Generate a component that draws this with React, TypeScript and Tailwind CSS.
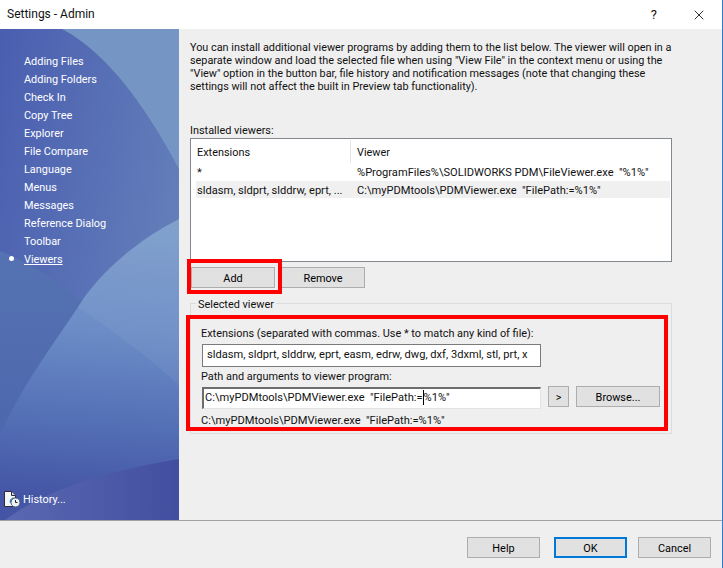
import React from "react";
import { X } from "lucide-react";

const navItems = [
  "Adding Files",
  "Adding Folders",
  "Check In",
  "Copy Tree",
  "Explorer",
  "File Compare",
  "Language",
  "Menus",
  "Messages",
  "Reference Dialog",
  "Toolbar",
  "Viewers",
];

const SidebarArt = () => (
  <svg className="absolute inset-0 h-full w-full" viewBox="0 0 179 491" preserveAspectRatio="none">
    <defs>
      <linearGradient id="base" x1="0" y1="0" x2="1" y2="0.5">
        <stop offset="0" stopColor="#4a5eb0" />
        <stop offset="1" stopColor="#6480ba" />
      </linearGradient>
      <linearGradient id="band" x1="0" y1="0" x2="0" y2="1">
        <stop offset="0" stopColor="#5573b2" />
        <stop offset="1" stopColor="#4a62aa" />
      </linearGradient>
      <linearGradient id="arc" gradientUnits="userSpaceOnUse" x1="110" y1="190" x2="90" y2="470">
        <stop offset="0" stopColor="#7b9ccb" />
        <stop offset="0.4" stopColor="#6b8cc6" />
        <stop offset="0.72" stopColor="#5470b6" />
        <stop offset="1" stopColor="#4455a5" />
      </linearGradient>
      <linearGradient id="foot" x1="0" y1="0" x2="1" y2="0">
        <stop offset="0" stopColor="#5a68b2" />
        <stop offset="1" stopColor="#424fa0" />
      </linearGradient>
    </defs>
    <rect width="179" height="491" fill="url(#base)" />
    <path d="M62 0 C110 25 150 85 179 140 L179 0 Z" fill="#7596c4" />
    <path d="M0 222 C50 240 125 305 179 356 L179 491 L0 491 Z" fill="url(#band)" />
    <path d="M179 190 C130 215 95 250 78 278 C50 320 20 360 0 406 L0 491 L179 491 Z" fill="url(#arc)" />
    <path d="M179 190 C130 215 95 250 78 278 C110 300 145 325 179 356 Z" fill="#ffffff" opacity="0.05" />
    <path d="M5 491 C40 465 90 445 179 430 L179 491 Z" fill="url(#foot)" />
  </svg>
);

const HistoryIcon = () => (
  <svg width="17" height="17" viewBox="0 0 17 17">
    <path d="M.5.5h7l4 4v11H.5z" fill="#f4f6f8" stroke="#2b2b3a" strokeWidth="1" />
    <path d="M7.5.5v4h4" fill="#d5dbe2" stroke="#2b2b3a" strokeWidth="1" />
    <path d="M5.5 11a5 5 0 0 1 5-4.5v3l-3 3z" fill="#2f82b8" />
    <circle cx="11.5" cy="11.5" r="4.5" fill="#eef2f6" stroke="#4a5a78" strokeWidth="1" />
    <path d="M11.5 9v2.5h2" fill="none" stroke="#222" strokeWidth="1" />
  </svg>
);

const Btn = ({ label, className = "" }: { label: string; className?: string }) => (
  <button className={`flex h-[21px] items-center justify-center border bg-[#e1e1e1] pt-px text-black ${className}`}>
    {label}
  </button>
);

export default function App() {
  return (
    <div
      className="flex h-[568px] w-[723px] flex-col overflow-hidden border-r border-[#2b7cd0] bg-[#efefef] text-[10.9px] leading-[13px] text-[#111]"
      style={{ fontFamily: "Roboto, sans-serif" }}
    >
      <header className="flex h-[29px] items-center justify-between bg-white pl-[7px] pr-[15px]">
        <span className="text-[12px]">Settings - Admin</span>
        <div className="flex items-center gap-[34px]">
          <span className="text-[13px]">?</span>
          <X className="h-[16px] w-[16px] text-[#222]" strokeWidth={1.4} />
        </div>
      </header>

      <div className="flex h-[491px]">
        <aside className="relative flex w-[179px] shrink-0 flex-col justify-between overflow-hidden pb-[12px] pt-[23px] text-white">
          <SidebarArt />
          <nav className="relative flex flex-col">
            {navItems.map((item) => (
              <div key={item} className="relative flex h-[18px] items-center pl-[24px]">
                {item === "Viewers" && <span className="absolute left-[9px] top-[6px] h-[5px] w-[5px] rounded-full bg-white" />}
                <span className={item === "Viewers" ? "underline" : ""}>{item}</span>
              </div>
            ))}
          </nav>
          <div className="relative flex items-center gap-[2px] pl-[4px]">
            <HistoryIcon />
            <span>History...</span>
          </div>
        </aside>

        <main className="flex min-w-0 flex-1 flex-col pl-[11px] pt-[12px]">
          <p className="whitespace-nowrap text-[10.85px]">
            You can install additional viewer programs by adding them to the list below. The viewer will open in a
            <br />
            separate window and load the selected file when using "View File" in the context menu or using the
            <br />
            "View" option in the button bar, file history and notification messages (note that changing these
            <br />
            settings will not affect the built in Preview tab functionality).
          </p>

          <div className="mt-[31px]">Installed viewers:</div>

          <div className="mt-[1px] h-[124px] w-[482px] whitespace-pre border border-[#828790] bg-white pl-[5px] pr-px pt-px">
            <div className="flex h-[23px] items-center">
              <span className="w-[154px] shrink-0 pl-[1px] pt-[2px]">Extensions</span>
              <span className="flex h-full items-center border-l border-[#e5e5e5] pl-[6px] pt-[2px]">Viewer</span>
            </div>
            <div className="flex h-[18px] items-center pt-[1px] text-[11.1px]">
              <span className="w-[155px] shrink-0 pl-[1px]">*</span>
              <span className="pl-[6px]">%ProgramFiles%\SOLIDWORKS PDM\FileViewer.exe  "%1%"</span>
            </div>
            <div className="flex h-[17px] items-center bg-[#f0f0f0] pt-px text-[11.1px]">
              <span className="w-[155px] shrink-0 pl-[1px]">sldasm, sldprt, slddrw, eprt, ...</span>
              <span className="pl-[6px]">C:\myPDMtools\PDMViewer.exe  "FilePath:=%1%"</span>
            </div>
          </div>

          <div className="mt-[5px] flex gap-[6px] pl-px">
            <div className="relative">
              <Btn label="Add" className="w-[84px] border-[#adadad]" />
              <div className="absolute -left-[4px] -top-[8px] h-[35px] w-[95px] border-[4px] border-[#ff0000]" />
            </div>
            <Btn label="Remove" className="w-[84px] border-[#adadad]" />
          </div>

          <div className="relative mt-[15px] h-[131px] w-[482px] border border-[#dcdcdc] pl-[10px] pt-[23px]">
            <span className="absolute -top-[6px] left-[5px] bg-[#efefef] px-[2px]">Selected viewer</span>
            <div>Extensions (separated with commas. Use * to match any kind of file):</div>
            <div className="ml-px mt-[4px] flex h-[23px] w-[339px] items-center overflow-hidden whitespace-nowrap border border-[#7a7a7a] bg-white pb-[2px] pl-[4px] text-[11.1px]">
              sldasm, sldprt, slddrw, eprt, easm, edrw, dwg, dxf, 3dxml, stl, prt, x
            </div>
            <div className="mt-[3px]">Path and arguments to viewer program:</div>
            <div className="ml-px mt-[4px] flex items-start gap-[7px]">
              <div className="flex h-[22px] w-[339px] items-center whitespace-pre border-b border-l-2 border-r border-t-2 border-b-[#e3e3e3] border-l-[#6d6d6d] border-r-[#e3e3e3] border-t-[#6d6d6d] bg-white pb-[2px] pl-[1px] text-[11.1px]">
                C:\myPDMtools\PDMViewer.exe  "FilePath:=
                <span className="inline-block h-[15px] w-px bg-black" />
                %1%"
              </div>
              <Btn label=">" className="-mt-px w-[21px] border-[#adadad]" />
              <Btn label="Browse..." className="-mt-px w-[84px] border-[#adadad]" />
            </div>
            <div className="mt-[5px] whitespace-pre text-[11.1px]">C:\myPDMtools\PDMViewer.exe  "FilePath:=%1%"</div>
            <div className="absolute -left-[5px] top-[11px] h-[116px] w-[482px] border-[4px] border-[#ff0000]" />
          </div>
        </main>
      </div>

      <footer className="flex h-[48px] justify-end gap-[11px] border-t border-[#a0a0a0] pr-[11px] pt-[16px]">
        <Btn label="Help" className="w-[73px] border-[#adadad]" />
        <Btn label="OK" className="ml-[3px] w-[73px] border-2 border-[#0078d7]" />
        <Btn label="Cancel" className="w-[73px] border-[#adadad]" />
      </footer>
    </div>
  );
}
